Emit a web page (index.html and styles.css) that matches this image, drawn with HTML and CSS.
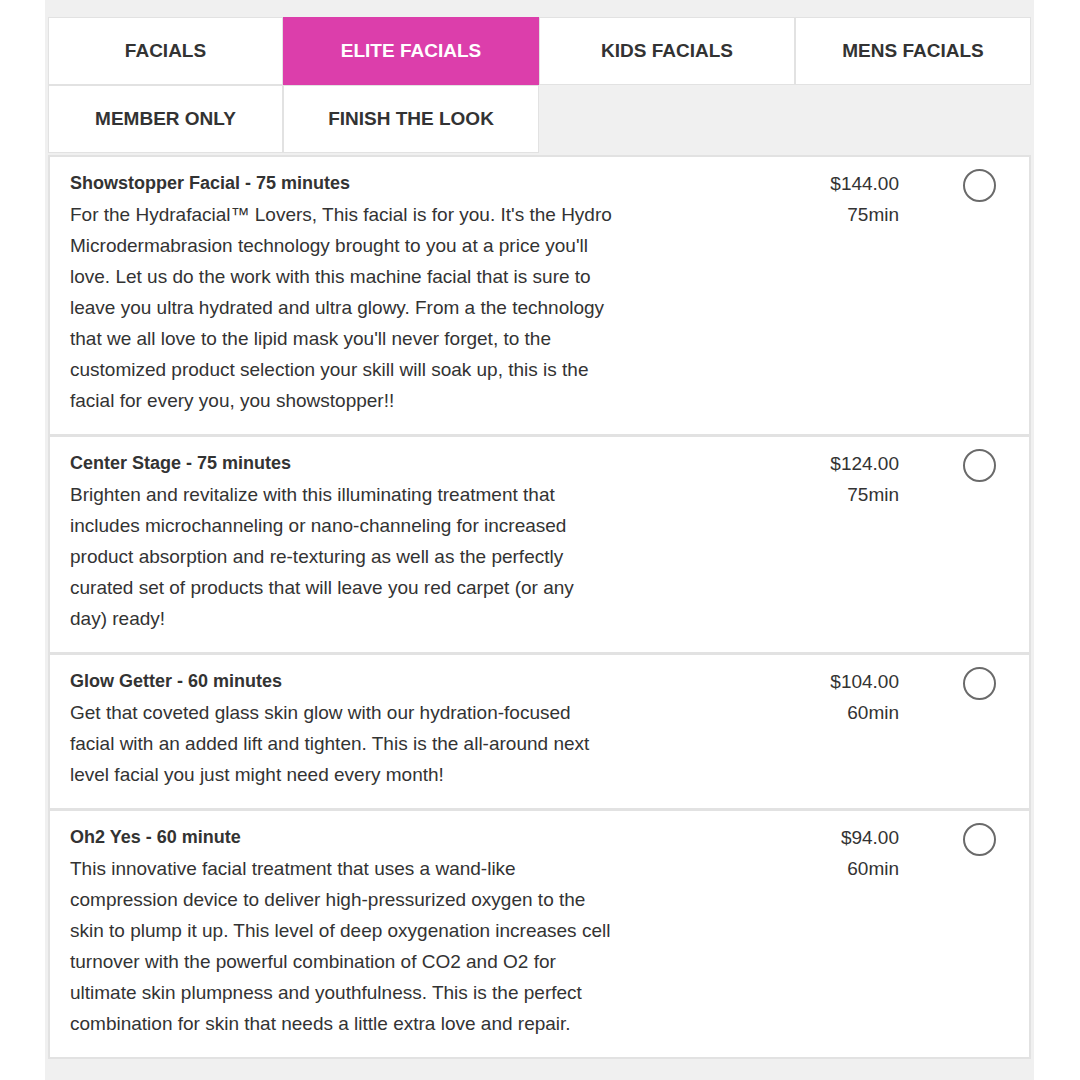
FILE: index.html
```html
<!DOCTYPE html>
<html lang="en">
<head>
    <meta charset="UTF-8">
    <meta name="viewport" content="width=device-width, initial-scale=1.0">
    <title>Elite Facials</title>
    <link rel="stylesheet" href="styles.css">
</head>
<body>
    <div class="panel">
        <div class="tabs">
            <div class="tab">Facials</div>
            <div class="tab active">Elite Facials</div>
            <div class="tab">Kids Facials</div>
            <div class="tab">Mens Facials</div>
            <div class="tab">Member Only</div>
            <div class="tab">Finish the Look</div>
        </div>

        <div class="service">
            <div class="info">
                <div class="title">Showstopper Facial - 75 minutes</div>
                <div class="desc">For the Hydrafacial™ Lovers, This facial is for you. It's the Hydro Microdermabrasion technology brought to you at a price you'll love. Let us do the work with this machine facial that is sure to leave you ultra hydrated and ultra glowy. From a the technology that we all love to the lipid mask you'll never forget, to the customized product selection your skill will soak up, this is the facial for every you, you showstopper!!</div>
            </div>
            <div class="price">$144.00<br>75min</div>
            <div class="pick"><span class="radio"></span></div>
        </div>

        <div class="service">
            <div class="info">
                <div class="title">Center Stage - 75 minutes</div>
                <div class="desc">Brighten and revitalize with this illuminating treatment that includes microchanneling or nano-channeling for increased product absorption and re-texturing as well as the perfectly curated set of products that will leave you red carpet (or any day) ready!</div>
            </div>
            <div class="price">$124.00<br>75min</div>
            <div class="pick"><span class="radio"></span></div>
        </div>

        <div class="service">
            <div class="info">
                <div class="title">Glow Getter - 60 minutes</div>
                <div class="desc">Get that coveted glass skin glow with our hydration-focused facial with an added lift and tighten. This is the all-around next level facial you just might need every month!</div>
            </div>
            <div class="price">$104.00<br>60min</div>
            <div class="pick"><span class="radio"></span></div>
        </div>

        <div class="service">
            <div class="info">
                <div class="title">Oh2 Yes - 60 minute</div>
                <div class="desc">This innovative facial treatment that uses a wand-like compression device to deliver high-pressurized oxygen to the skin to plump it up. This level of deep oxygenation increases cell turnover with the powerful combination of CO2 and O2 for ultimate skin plumpness and youthfulness. This is the perfect combination for skin that needs a little extra love and repair.</div>
            </div>
            <div class="price">$94.00<br>60min</div>
            <div class="pick"><span class="radio"></span></div>
        </div>
    </div>
</body>
</html>
```

FILE: styles.css
```css
body {
    margin: 0;
    background-color: #fff;
    font-family: "Liberation Sans", Arial, sans-serif;
    color: #333;
}
.panel {
    width: 983px;
    min-height: 1063px;
    margin-left: 45px;
    padding: 17px 3px 0 3px;
    background-color: #f0f0f0;
}
.tabs {
    display: grid;
    grid-template-columns: 235px 256px 256px 236px;
}
.tab {
    height: 68px;
    display: flex;
    justify-content: center;
    align-items: center;
    background-color: #fff;
    border: 1px solid #e2e2e2;
    box-sizing: border-box;
    font-size: 19px;
    font-weight: bold;
    text-transform: uppercase;
    color: #333;
}
.tab.active {
    background-color: #dc3eab;
    border-color: #dc3eab;
    color: #fff;
}
.service {
    display: flex;
    align-items: flex-start;
    background-color: #fff;
    border: 2px solid #e2e2e2;
    margin-top: -1px;
    padding: 11px 0 18px 20px;
    line-height: 31px;
    font-size: 19px;
}
.tabs + .service {
    margin-top: 2px;
}
.info {
    width: 544px;
}
.title {
    font-weight: bold;
    font-size: 18px;
    color: #333;
}
.desc {
    color: #333;
}
.price {
    width: 285px;
    text-align: right;
    color: #333;
}
.pick {
    padding-left: 64px;
    padding-top: 1px;
}
.radio {
    display: block;
    width: 29px;
    height: 29px;
    border: 2px solid #6a6a6a;
    border-radius: 50%;
}
```
